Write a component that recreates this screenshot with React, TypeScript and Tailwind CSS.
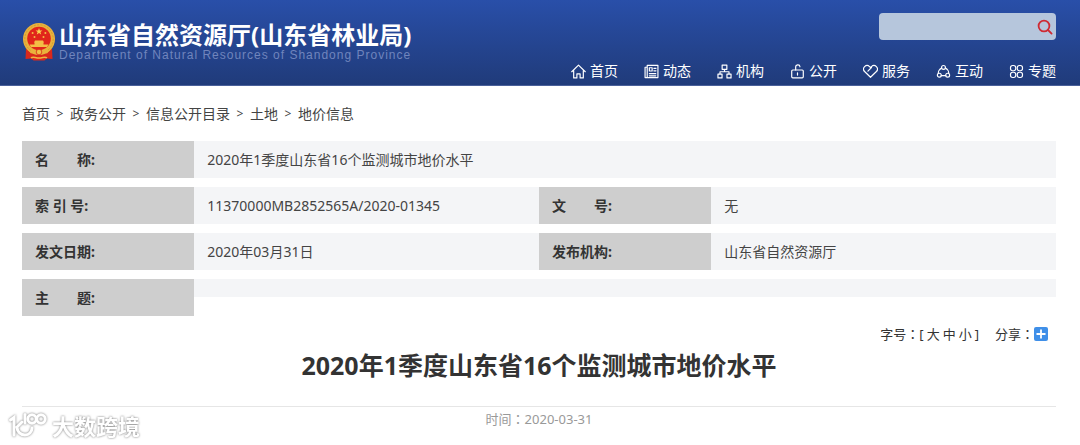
import React from 'react';

const stroke = {
  viewBox: '0 0 14 14',
  fill: 'none',
  stroke: 'currentColor',
  strokeWidth: 1.1,
  strokeLinecap: 'round',
  strokeLinejoin: 'round',
} as const;

const navItems = [
  {
    label: '首页',
    icon: <path d="M.7 7.2 7 1l6.3 6.2M2.5 6v7h3V9.2h3V13h3V6" />,
  },
  {
    label: '动态',
    icon: (
      <>
        <path d="M3 1.3h10v11.4H3zM3 3H1v9.7h2M5 9h6M5 11h6M9.2 4h2M9.2 6.4h2" />
        <path d="M5 3.5h2.6v3H5z" />
      </>
    ),
  },
  {
    label: '机构',
    icon: (
      <path d="M4.8 1h4.4v4H4.8zM.9 9.4h3.8v3.6H.9zM9.3 9.4h3.8v3.6H9.3zM7 5v2.2M2.8 9.4V7.2h8.4v2.2" />
    ),
  },
  {
    label: '公开',
    icon: (
      <>
        <rect x="1.6" y="5.6" width="10.8" height="7.4" rx="1" />
        <path d="M5.3 5.6V3a2 2 0 0 1 4-.4M7 8.3v2" />
      </>
    ),
  },
  {
    label: '服务',
    icon: (
      <path d="M7 12.4 1.5 7a3.3 3.3 0 0 1 0-4.6 3.3 3.3 0 0 1 4.6 0L7 3.3l.9-.9a3.3 3.3 0 0 1 4.6 0 3.3 3.3 0 0 1 0 4.6zM4.6 6.6 7.9 3.3" />
    ),
  },
  {
    label: '互动',
    icon: (
      <>
        <circle cx="7" cy="3.2" r="1.8" />
        <circle cx="3.1" cy="10.4" r="1.8" />
        <circle cx="10.9" cy="10.4" r="1.8" />
        <path d="M5.2 3.8C3.4 4.8 2.2 6.6 2.1 8.8M8.8 3.8c1.8 1 3 2.8 3.1 5M4.9 10.9h4.2" />
      </>
    ),
  },
  {
    label: '专题',
    icon: (
      <>
        <rect x="1.4" y="1.4" width="4.9" height="4.9" rx="2" />
        <rect x="7.7" y="1.4" width="4.9" height="4.9" rx="2" />
        <rect x="1.4" y="7.7" width="4.9" height="4.9" rx="2" />
        <rect x="7.7" y="7.7" width="4.9" height="4.9" rx="2" />
      </>
    ),
  },
];

const crumbs = ['首页', '政务公开', '信息公开目录', '土地', '地价信息'];

function Emblem() {
  return (
    <svg viewBox="0 0 34 38" className="h-[38px] w-[34px] shrink-0">
      <path d="M4 26 3.5 36l6-.5 2 2h11l2-2 6 .5L30 26z" fill="#d9281c" />
      <circle cx="17" cy="16" r="16" fill="#e9b23c" />
      <circle cx="17" cy="16" r="14.2" fill="none" stroke="#d39a30" strokeWidth="1" strokeDasharray="2 1.4" />
      <circle cx="17" cy="15.5" r="11.8" fill="#e1251b" />
      <path d="m17 5 .9 2.4h2.5l-2 1.6.8 2.5-2.2-1.5-2.2 1.5.8-2.5-2-1.6h2.5z" fill="#f8d251" />
      <g fill="#f3bd45">
        <circle cx="10.6" cy="10" r="1" />
        <circle cx="23.4" cy="10" r="1" />
        <circle cx="12.5" cy="14" r="1" />
        <circle cx="21.5" cy="14" r="1" />
        <path d="M13 17.5h8l1 2H12zM12.5 19.5h9v2h-9zM7.5 21.5h19L25 24H9z" />
      </g>
      <path d="M7 28c3-2 6 1 10 0s7-2 10 0l-2 2.5c-3-1-5 1-8 1s-5-2-8-1z" fill="#e9b23c" />
      <circle cx="17" cy="29" r="2.8" fill="#f0bd45" stroke="#d9281c" strokeWidth=".8" />
      <path d="M9 35c2-2 4 0 8 0s6-2 8 0" fill="none" stroke="#efb53f" strokeWidth="1.5" />
    </svg>
  );
}

function Header() {
  return (
    <header className="flex justify-between border-b border-[#4a609a] bg-linear-to-b from-[#294fa9] to-[#203b7a] pr-6 pl-[22px] text-white">
      <a href="#" className="flex items-start gap-[3px] pt-[23px]">
        <Emblem />
        <span className="flex flex-col">
          <span className="text-[24px] leading-[24px] font-bold whitespace-nowrap">山东省自然资源厅(山东省林业局)</span>
          <span className="font-['Liberation_Sans',sans-serif] text-xs leading-[16px] tracking-[1px] whitespace-nowrap text-[#7085bd]">
            Department of Natural Resources of Shandong Province
          </span>
        </span>
      </a>
      <div className="flex flex-col items-end gap-[21px] pt-[13px] pb-1">
        <form className="flex h-[27px] w-[177px] items-center rounded-[4px] bg-[#b6c6dc] pr-[3px]">
          <input type="search" aria-label="搜索" className="h-full min-w-0 flex-1 px-2 text-sm text-gray-800 outline-none" />
          <button type="button" aria-label="搜索" className="text-[#cf2a33]">
            <svg viewBox="0 0 16 16" className="size-4" fill="none" stroke="currentColor" strokeWidth="1.8" strokeLinecap="round">
              <circle cx="7" cy="7" r="5.4" />
              <path d="m11 11 3.6 3.6" />
            </svg>
          </button>
        </form>
        <nav className="flex gap-[26px] text-sm">
          {navItems.map((item) => (
            <a key={item.label} href="#" className="flex items-center gap-1 whitespace-nowrap">
              <svg {...stroke} className="size-[15px]">
                {item.icon}
              </svg>
              {item.label}
            </a>
          ))}
        </nav>
      </div>
    </header>
  );
}

function Label({ children }: { children: React.ReactNode }) {
  return (
    <th scope="row" className="h-[37px] w-1/6 bg-[#cecece] px-[13px] text-left font-bold whitespace-pre">
      {children}
    </th>
  );
}

function Value({ children, span }: { children: React.ReactNode; span?: number }) {
  return (
    <td colSpan={span} className="bg-[#f4f5f7] px-[13px] text-[#444]">
      {children}
    </td>
  );
}

function InfoTable() {
  return (
    <table className="w-full table-fixed border-separate border-spacing-x-0 border-spacing-y-[9px] text-sm">
      <colgroup>
        <col className="w-1/6" />
        <col className="w-1/3" />
        <col className="w-1/6" />
        <col className="w-1/3" />
      </colgroup>
      <tbody>
        <tr>
          <Label>名{'\u3000\u3000'}称:</Label>
          <Value span={3}>2020年1季度山东省16个监测城市地价水平</Value>
        </tr>
        <tr>
          <Label>索 引 号:</Label>
          <Value>11370000MB2852565A/2020-01345</Value>
          <Label>文{'\u3000\u3000'}号:</Label>
          <Value>无</Value>
        </tr>
        <tr>
          <Label>发文日期:</Label>
          <Value>2020年03月31日</Value>
          <Label>发布机构:</Label>
          <Value>山东省自然资源厅</Value>
        </tr>
        <tr>
          <Label>主{'\u3000\u3000'}题:</Label>
          <td colSpan={3} className="p-0 align-top">
            <div className="h-[18px] bg-[#f4f5f7]" />
          </td>
        </tr>
      </tbody>
    </table>
  );
}

// full-width colon, centred in its cell
function Colon() {
  return <span className="font-['Noto_Sans_CJK_TC',sans-serif]">：</span>;
}

function Watermark() {
  return (
    <div className="absolute bottom-1 left-2 flex items-center gap-1 text-white drop-shadow-[0_0_1px_#777]">
      <svg viewBox="0 0 40 28" className="h-7 w-10" fill="none" stroke="currentColor" strokeWidth="3" strokeLinecap="round">
        <path d="M2.5 8 6 5.5V23M14 10l-5 5c0 5 4 8 8 8s7-3 7-7" />
        <path d="M17 2.5V11" />
        <circle cx="24" cy="7" r="4.2" />
        <circle cx="33" cy="7" r="4.2" />
      </svg>
      <span className="text-[22px] leading-[26px] font-bold">大数跨境</span>
    </div>
  );
}

export default function App() {
  return (
    <div className="relative bg-white pb-4 font-['Noto_Sans','Noto_Sans_CJK_SC',sans-serif] text-[#333]">
      <Header />
      <main className="pr-6 pl-[22px]">
        <nav className="flex items-center gap-[6px] pt-[18px] text-sm text-[#444]">
          {crumbs.map((crumb, i) => (
            <React.Fragment key={crumb}>
              {i > 0 && <span className="w-2 text-center text-xs">&gt;</span>}
              <a href="#">{crumb}</a>
            </React.Fragment>
          ))}
        </nav>
        <div className="pt-2">
          <InfoTable />
        </div>
        <div className="flex items-center justify-end gap-4 pr-2 text-[13px] leading-[18px]">
          <div className="flex gap-[3px]">
            <span>
              字号
              <Colon />[
            </span>
            <button type="button">大</button>
            <button type="button">中</button>
            <button type="button">小</button>
            <span>]</span>
          </div>
          <div className="flex items-center">
            <span>
              分享
              <Colon />
            </span>
            <button type="button" aria-label="分享" className="rounded-[2px] bg-[#3f8fe8] text-white">
              <svg viewBox="0 0 14 14" className="size-[14px]" stroke="currentColor" strokeWidth="1.8">
                <path d="M7 2.5v9M2.5 7h9" />
              </svg>
            </button>
          </div>
        </div>
        <h1 className="pt-1 pb-[22px] text-center text-[25px] leading-[37px] font-bold">
          2020年1季度山东省16个监测城市地价水平
        </h1>
        <p className="border-t border-[#e6e6e6] pt-[3px] text-center text-[13px] leading-[18px] text-[#999]">
          时间
          <Colon />
          2020-03-31
        </p>
      </main>
      <Watermark />
    </div>
  );
}
